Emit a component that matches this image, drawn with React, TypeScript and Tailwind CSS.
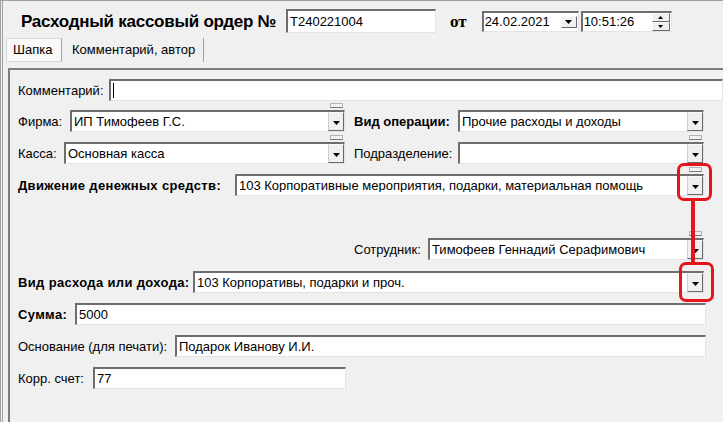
import React from 'react';

const Arrow = () => (
  <svg width="7" height="4" viewBox="0 0 7 4" className="block">
    <path d="M0 0h7L3.5 4z" fill="#000" />
  </svg>
);

const sunken =
  'border-t-2 border-l-2 border-r border-b border-t-[#6e6e6e] border-l-[#6e6e6e] border-r-[#e3e3e3] border-b-[#e3e3e3] bg-white';

const Combo = ({
  className,
  value,
  tab = true,
}: {
  className: string;
  value: string;
  tab?: boolean;
}) => (
  <div className={`relative flex h-[22px] shrink-0 items-center ${sunken} ${className}`}>
    <span className="flex-1 truncate pl-[2px] text-[13px] leading-none text-black">{value}</span>
    <div className="flex h-full w-[16px] items-center justify-center border-l border-t border-b border-r border-l-[#cfcfcf] border-t-[#f8f8f8] border-b-[#696969] border-r-[#696969] bg-[#f0f0f0] pt-[3px]">
      <Arrow />
    </div>
    {tab && (
      <div className="absolute -top-[9px] right-[1px] h-[5px] w-[13px] border border-[#b4b4b4] border-b-[#7a7a7a] bg-[#f0f0f0]" />
    )}
  </div>
);

const Field = ({ className, value }: { className: string; value: string }) => (
  <div className={`flex h-[22px] shrink-0 items-center ${sunken} ${className}`}>
    <span className="pl-[2px] text-[13px] leading-none text-black">{value}</span>
  </div>
);

const Label = ({
  className,
  bold,
  children,
}: {
  className: string;
  bold?: boolean;
  children: React.ReactNode;
}) => (
  <div
    className={`shrink-0 text-[13px] leading-none text-black ${bold ? 'font-bold tracking-[0.35px]' : ''} ${className}`}
  >
    {children}
  </div>
);

const App = () => {
  return (
    <div className="relative h-[422px] w-[723px] overflow-hidden border-t border-l border-[#a0a0a0] bg-[#f0f0f0] font-['Liberation_Sans',Arial,sans-serif]">
      <div className="ml-[1px] flex h-full flex-col border-l border-[#a0a0a0]">
        {/* header */}
        <div className="mt-[8px] flex h-[24px] items-center">
          <div className="ml-[18px] w-[256px] text-[17px] font-bold leading-none tracking-[-0.25px] text-black whitespace-nowrap">
            Расходный кассовый ордер №
          </div>
          <div className={`ml-[9px] flex h-[24px] w-[150px] items-center ${sunken}`}>
            <span className="pl-[2px] text-[13px] text-black">T240221004</span>
          </div>
          <div className="ml-[14px] font-['Liberation_Serif',serif] text-[17px] font-bold leading-none text-black">
            от
          </div>
          <div className={`ml-[15px] flex h-[21px] w-[97px] items-center ${sunken}`}>
            <span className="flex-1 pl-[1px] text-[13px] leading-none text-black">24.02.2021</span>
            <div className="mr-[1px] flex h-[12px] w-[16px] items-center justify-center border border-t-[#f8f8f8] border-l-[#f8f8f8] border-b-[#696969] border-r-[#696969] bg-[#f0f0f0]">
              <Arrow />
            </div>
          </div>
          <div className={`ml-[2px] flex h-[21px] w-[91px] items-center ${sunken}`}>
            <span className="flex-1 pl-[1px] text-[13px] leading-none text-black">10:51:26</span>
            <div className="mr-[1px] flex h-full w-[18px] flex-col">
              <div className="flex flex-1 items-center justify-center border border-t-[#f8f8f8] border-l-[#f8f8f8] border-b-[#696969] border-r-[#696969] bg-[#f0f0f0]">
                <svg width="5" height="3" viewBox="0 0 5 3"><path d="M0 3h5L2.5 0z" fill="#000" /></svg>
              </div>
              <div className="flex flex-1 items-center justify-center border border-t-[#f8f8f8] border-l-[#f8f8f8] border-b-[#696969] border-r-[#696969] bg-[#f0f0f0]">
                <svg width="5" height="3" viewBox="0 0 5 3"><path d="M0 0h5L2.5 3z" fill="#000" /></svg>
              </div>
            </div>
          </div>
        </div>

        {/* tabs */}
        <div className="mt-[5px] ml-[3px] flex h-[24px]">
          <div className="flex w-[56px] items-center border border-[#d9d9d9] border-r-[#a0a0a0] bg-[#f9f9f9] pl-[6px] text-[13px] text-black">
            Шапка
          </div>
          <div className="flex w-[142px] items-center border-r border-[#a0a0a0] pl-[10px] text-[13px] text-black">
            Комментарий, автор
          </div>
        </div>

        {/* panel */}
        <div className="mt-[6px] ml-[5px] flex-1 border-t-2 border-l-2 border-[#7c7c7c] pl-[8px] pt-[9px]">
          <div className="flex flex-col">
            <div className="flex items-center">
              <Label className="w-[91px]">Комментарий:</Label>
              <div className={`flex h-[22px] w-[640px] items-center ${sunken}`}>
                <div className="ml-[2px] h-[15px] w-[1px] bg-black" />
              </div>
            </div>

            <div className="mt-[9px] flex items-center">
              <Label className="w-[52px]">Фирма:</Label>
              <Combo className="w-[275px]" value="ИП Тимофеев Г.С." />
              <Label className="ml-[9px] w-[104px] font-bold">Вид операции:</Label>
              <Combo className="w-[246px]" value="Прочие расходы и доходы" tab={false} />
            </div>

            <div className="mt-[10px] flex items-center">
              <Label className="w-[46px]">Касса:</Label>
              <Combo className="w-[281px]" value="Основная касса" />
              <Label className="ml-[9px] w-[104px]">Подразделение:</Label>
              <Combo className="w-[246px]" value="" />
            </div>

            <div className="mt-[10px] flex items-center">
              <Label bold className="w-[217px]">Движение денежных средств:</Label>
              <Combo
                className="w-[469px]"
                value="103 Корпоративные мероприятия, подарки, материальная помощь"
              />
            </div>

            <div className="mt-[42px] flex items-center">
              <Label className="ml-[336px] w-[74px]">Сотрудник:</Label>
              <Combo className="w-[276px]" value="Тимофеев Геннадий Серафимович" />
            </div>

            <div className="mt-[11px] flex items-center">
              <Label bold className="w-[175px]">Вид расхода или дохода:</Label>
              <Combo className="w-[511px]" value="103 Корпоративы, подарки и проч." tab={false} />
            </div>

            <div className="mt-[10px] flex items-center">
              <Label bold className="w-[57px]">Сумма:</Label>
              <Field className="w-[631px]" value="5000" />
            </div>

            <div className="mt-[10px] flex items-center">
              <Label className="w-[157px]">Основание (для печати):</Label>
              <Field className="w-[531px]" value="Подарок Иванову И.И." />
            </div>

            <div className="mt-[10px] flex items-center">
              <Label className="w-[75px]">Корр. счет:</Label>
              <Field className="w-[253px]" value="77" />
            </div>
          </div>
        </div>
      </div>

      {/* annotation */}
      <div className="absolute left-[676px] top-[162px] h-[38px] w-[35px] rounded-[7px] border-[3px] border-[#e8141c]" />
      <div className="absolute left-[690px] top-[199px] h-[63px] w-[4px] bg-[#e8141c]" />
      <div className="absolute left-[678px] top-[261px] h-[40px] w-[35px] rounded-[7px] border-[3px] border-[#e8141c]" />
    </div>
  );
};

export default App;
